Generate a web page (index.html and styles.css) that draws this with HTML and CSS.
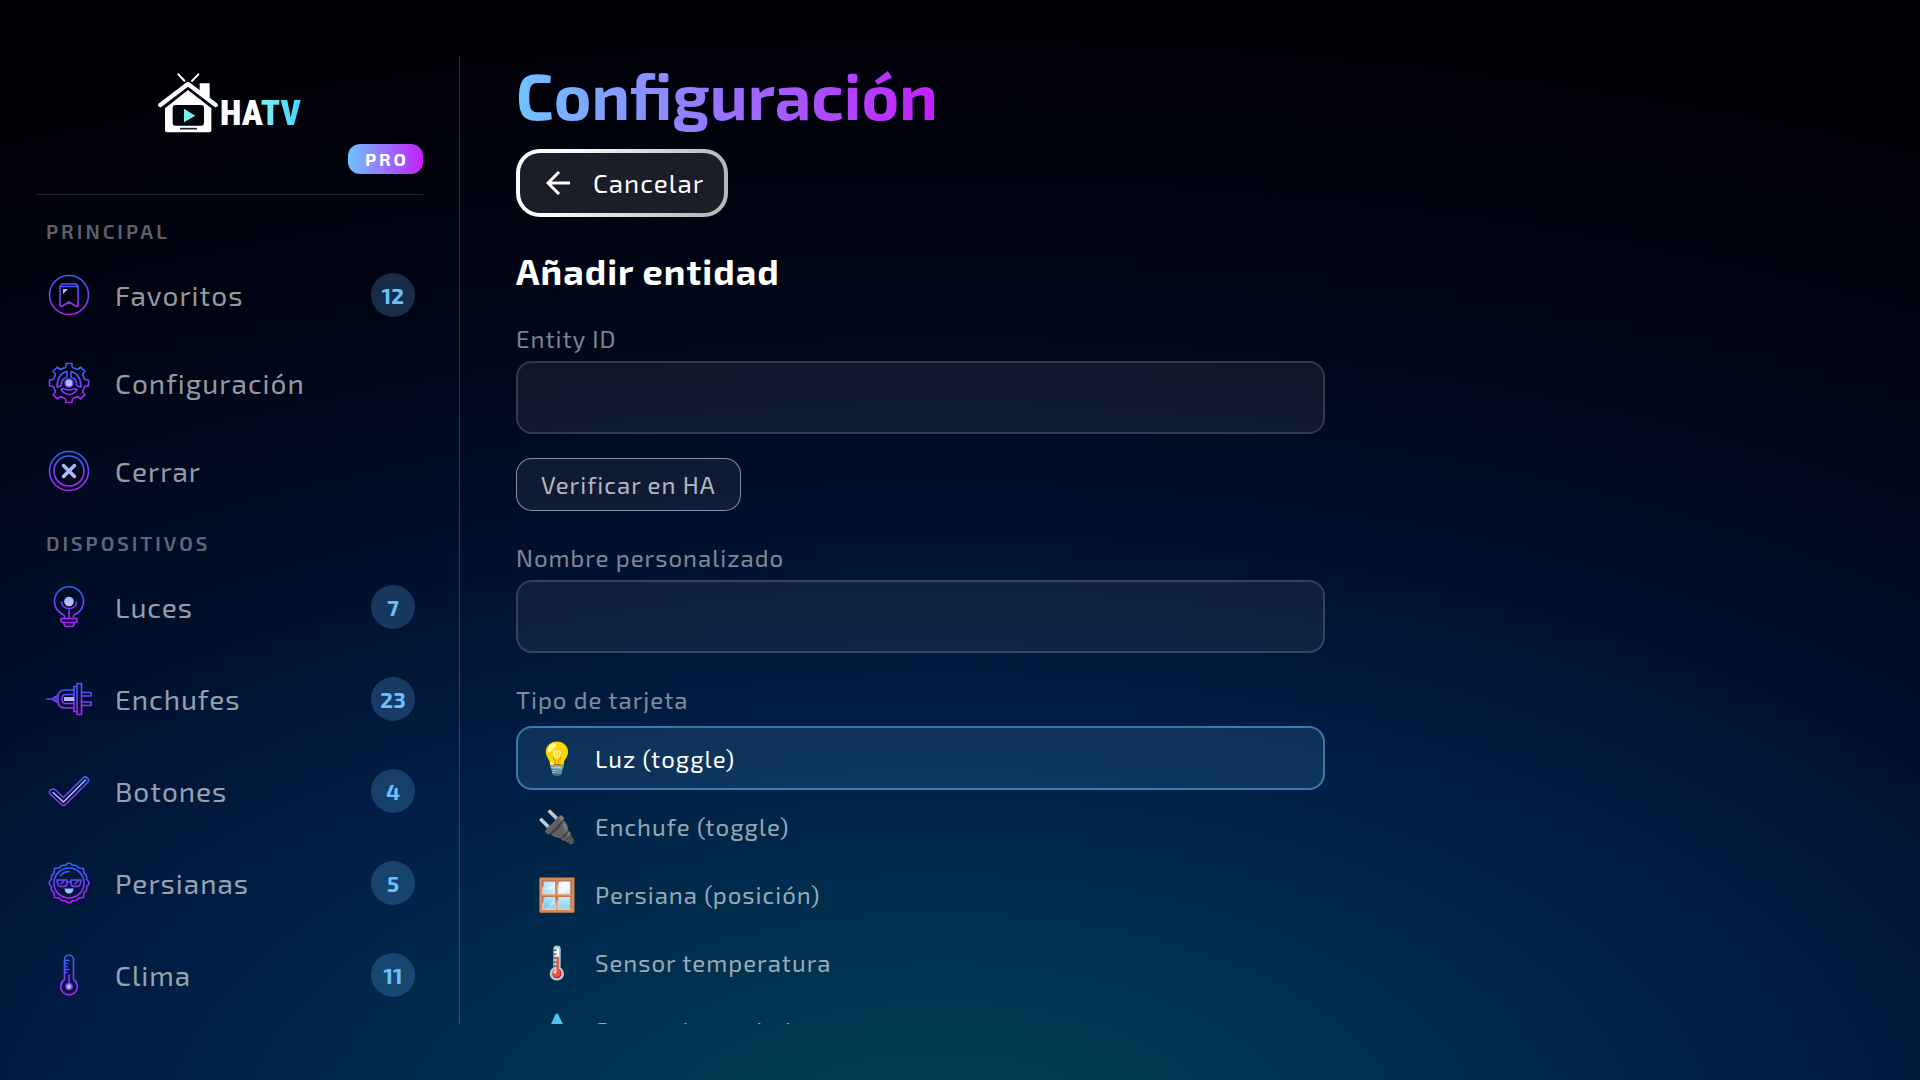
FILE: index.html
```html
<!DOCTYPE html>
<html lang="es">
<head>
<meta charset="utf-8">
<meta name="viewport" content="width=device-width, initial-scale=1">
<title>HATV Pro - Configuración</title>
<link rel="stylesheet" href="styles.css">
</head>
<body>
<svg class="defs" aria-hidden="true">
  <defs>
    <linearGradient id="line" gradientUnits="userSpaceOnUse" x1="0" y1="-20" x2="0" y2="20">
      <stop offset="0" stop-color="#1f6dff"/><stop offset=".5" stop-color="#7340fa"/><stop offset="1" stop-color="#c11cf5"/>
    </linearGradient>
    <linearGradient id="glow" x1="0" y1="0" x2="0" y2="1">
      <stop offset="0" stop-color="#7cc4ff"/><stop offset="1" stop-color="#dcb4fb"/>
    </linearGradient>
    <linearGradient id="glow-wide" gradientUnits="userSpaceOnUse" x1="0" y1="-16" x2="0" y2="16">
      <stop offset="0" stop-color="#7cc4ff"/><stop offset="1" stop-color="#dcb4fb"/>
    </linearGradient>
  </defs>
</svg>
<div class="app">
  <aside class="sidebar">
    <header class="brand">
      <div class="logo">
        <svg class="logo-mark" viewBox="0 0 180 180" aria-hidden="true">
          <path d="M61 4 80 24M121 4 102 24" stroke="#fff" stroke-width="6" stroke-linecap="round"/>
          <path d="M21 106 90 51l70 55v66q0 6-6 6H27q-6 0-6-6z" fill="#fff"/>
          <path d="M7 98 90 33l83 65" fill="none" stroke="#00020c" stroke-width="23" stroke-linejoin="round"/>
          <path d="M125 31h30v50l-30-25z" fill="#fff"/>
          <path d="M7 96 90 33l83 63" fill="none" stroke="#fff" stroke-width="13" stroke-linecap="round" stroke-linejoin="round"/>
          <rect x="44" y="96" width="94" height="62" rx="9" fill="#00020c"/>
          <path d="M78 107v41l34-20z" fill="#74f0ee"/>
          <path d="M66 167h51" stroke="#18203c" stroke-width="5"/>
        </svg>
        <span class="logo-text">HA<b>TV</b></span>
      </div>
      <span class="pro">PRO</span>
    </header>
    <nav>
      <h2 class="nav-title">PRINCIPAL</h2>
      <ul class="nav-list">
        <li><a href="#favoritos" class="nav-item">
          <svg class="icon" viewBox="-23 -23 46 46"><circle r="19.5"/><path d="M-9-8.500V10Q-9 12.500-6.500 11L0 7 6.500 11Q9 12.500 9 10V-8.500ZM-9-8.500-7-11H7L9-8.500"/><path class="fill" d="M-6-6h5l-5 5z"/></svg>
          <span class="label">Favoritos</span><span class="count">12</span></a></li>
        <li><a href="#configuracion" class="nav-item">
          <svg class="icon" viewBox="-23 -23 46 46"><path d="M-4-15.300Q-3-16-3-17.500V-19.500H3V-17.500Q3-16 4-15.300Q6-14.800 8-13.600Q10-14 11.700-15.900L15.900-11.700Q13.500-10 13.600-8Q15-6 15.300-4Q16-3 19.500-3V3Q16 3 15.300 4Q15 6 13.600 8Q13.500 10 15.900 11.700L11.700 15.900Q10 14 8 13.600Q6 15 4 15.300Q3 16 3 19.500H-3Q-3 16-4 15.300Q-6 15-8 13.600Q-10 14-11.700 15.900L-15.900 11.700Q-13.500 10-13.600 8Q-15 6-15.300 4Q-16 3-19.500 3V-3Q-16-3-15.300-4Q-15-6-13.600-8Q-13.500-10-15.900-11.700L-11.700-15.900Q-10-14-8-13.600Q-6-15-4-15.300Z"/><path d="M-2-11.500Q-12-9-12 4Q-9 4-7.500 2Q-8-4-2-6ZM2-11.500Q12-9 12 4Q9 4 7.500 2Q8-4 2-6ZM-8 7Q0 16 8 7 7 5 4.500 6 0 8-4.500 6-7 5-8 7Z"/><circle class="fill" r="4"/><circle r="4"/></svg>
          <span class="label">Configuración</span></a></li>
        <li><a href="#cerrar" class="nav-item">
          <svg class="icon" viewBox="-23 -23 46 46"><circle r="19.5"/><circle r="15"/><path class="bright thick" d="M-5.500-5.500 5.500 5.500M5.500-5.500-5.500 5.500"/></svg>
          <span class="label">Cerrar</span></a></li>
      </ul>
      <h2 class="nav-title">DISPOSITIVOS</h2>
      <ul class="nav-list devices">
        <li><a href="#luces" class="nav-item">
          <svg class="icon" viewBox="-23 -23 46 46"><path d="M-4.500 11.500V9Q-5 7.500-7 7A14.500 14.500 0 1 1 7 7Q5 7.500 4.500 9V11.500M-7.500-5Q-7 1.500 0 1.500T7.500-5M0 1.500V11.500M-8 11.500H8V13.500Q8 15.500 6 15.500H-6Q-8 15.500-8 13.500ZM-5 15.500V17.500L-3.500 19.500H3.500L5 17.500V15.500Z"/><circle class="fill" cy="-5.500" r="4.800"/></svg>
          <span class="label">Luces</span><span class="count">7</span></a></li>
        <li><a href="#enchufes" class="nav-item">
          <svg class="icon" viewBox="-23 -23 46 46"><path d="M-22.500 0H-17L-13-2.500V2.500L-17 0M-13-2.500-11-3.500M-13 2.500-11 3.500M5-9H-4Q-10-9-11-3.500V3.500Q-10 9-4 9H5M5-4.500H-3Q-7-4.500-7 0T-3 4.500H5M5-12.500H8V12.500H5ZM8-15.500H12.500V15.500H8ZM12.500-6.500H22V-3H12.500M12.500 3H22V6.500H12.500"/><path class="fill" d="M-5-2H5V2H-5Z"/></svg>
          <span class="label">Enchufes</span><span class="count">23</span></a></li>
        <li><a href="#botones" class="nav-item">
          <svg class="icon" viewBox="-23 -23 46 46"><path d="M-7.500 13.500Q-5.500 15.500-3.500 13.500L19-9Q20.500-11 18.500-13 16.500-15 14.500-13.500L-5.500 6.500-13.500-1Q-16-3-18.500-1-20.500 1-19 3Z"/><path class="bright" d="M-16 1.500-5.500 11 16.500-11"/></svg>
          <span class="label">Botones</span><span class="count">4</span></a></li>
        <li><a href="#persianas" class="nav-item">
          <svg class="icon" viewBox="-23 -23 46 46"><path d="M0-20Q2-20 3.500-17.500 8-18.500 9.500-15L14.500-14.500 15-9.500Q18.500-8 17.500-3.500 20-2 20 0 20 2 17.500 3.500 18.500 8 15 9.500L14.500 14.500 9.500 15Q8 18.500 3.500 17.500 2 20 0 20-2 20-3.500 17.500-8 18.500-9.500 15L-14.500 14.500-15 9.500Q-18.500 8-17.500 3.500-20 2-20 0-20-2-17.500-3.500-18.500-8-15-9.500L-14.500-14.500-9.500-15Q-8-18.500-3.500-17.500-2-20 0-20Z"/><circle r="15"/><path d="M-8.500-7.500Q-5-11.500 0-11.500M-12-3H-2V0Q-2 3.500-5 3.500H-8Q-11 3.500-11.500 0ZM2-3H12L11.500 0Q11 3.500 8 3.500H5Q2 3.500 2 0ZM-2-1H2M-8 1-5-2M6 1 9-2"/><path class="fill" d="M-4.500 5.500H4.500Q4 10.500 0 10.500T-4.500 5.500Z"/></svg>
          <span class="label">Persianas</span><span class="count">5</span></a></li>
        <li><a href="#clima" class="nav-item">
          <svg class="icon" viewBox="-23 -23 46 46"><path d="M-4.500 4.500V-15.500A4.500 4.500 0 0 1 4.500-15.500V4.500A8.300 8.300 0 1 1-4.500 4.500ZM0 0V8M-4-14.500H0M-4-11.500H-2M-4-8.500H-2M-4-5.500H0M-4-2.500H-2"/><circle class="fill" cy="11.500" r="3"/><circle cy="11.500" r="3"/></svg>
          <span class="label">Clima</span><span class="count">11</span></a></li>
      </ul>
    </nav>
  </aside>
  <main class="content">
    <h1 class="page-title">Configuración</h1>
    <button type="button" class="cancel">
      <svg class="arrow" viewBox="0 0 24 24" aria-hidden="true"><path d="M24 12H2M13 1 2 12l11 11"/></svg>
      Cancelar
    </button>
    <form class="entity-form">
      <h2 class="form-title">Añadir entidad</h2>
      <div class="field">
        <label for="entity">Entity ID</label>
        <input id="entity" type="text">
      </div>
      <button type="button" class="verify">Verificar en HA</button>
      <div class="field">
        <label for="name">Nombre personalizado</label>
        <input id="name" type="text">
      </div>
      <div class="field card-types" role="radiogroup" aria-labelledby="type-title">
        <span id="type-title" class="group-title">Tipo de tarjeta</span>
        <label class="option"><input type="radio" name="type" checked><span class="emoji">💡</span>Luz (toggle)</label>
        <label class="option"><input type="radio" name="type"><span class="emoji">🔌</span>Enchufe (toggle)</label>
        <label class="option"><input type="radio" name="type"><span class="emoji">🪟</span>Persiana (posición)</label>
        <label class="option"><input type="radio" name="type"><span class="emoji">🌡️</span>Sensor temperatura</label>
        <label class="option"><input type="radio" name="type"><span class="emoji">💧</span>Sensor humedad</label>
      </div>
    </form>
  </main>
</div>
</body>
</html>
```
FILE: styles.css
```css
* { box-sizing: border-box; }

body {
  margin: 0;
  color: #fff;
  font-family: "Exo 2", "Noto Sans", sans-serif;
  font-size: 24px;
  line-height: 32px;
  letter-spacing: 1px;
  background: radial-gradient(ellipse 120% 106% at 49% 106%,
    #004254 0%, #003c53 7%, #002f4f 20%, #001c42 39%, #000e2a 58%, #000412 80%, #000006 100%) fixed;
}

h1, h2, ul { margin: 0; padding: 0; }
button, input { font: inherit; color: inherit; letter-spacing: inherit; }

.defs { position: absolute; width: 0; height: 0; }

.app {
  display: flex;
  height: 100vh;
  padding: 56px 0;
}

/* Sidebar */
.sidebar {
  flex: 0 0 460px;
  padding: 0 36px;
  border-right: 1px solid rgba(255, 255, 255, .18);
  overflow: hidden;
}

.brand {
  display: flex;
  flex-direction: column;
  gap: 8px;
  padding: 14px 0 20px;
  border-bottom: 1px solid rgba(255, 255, 255, .14);
}

.logo {
  display: flex;
  align-self: center;
  align-items: flex-end;
  gap: 2px;
  height: 66px;
}

.logo-mark { width: 60px; height: 60px; fill: none; align-self: center; }

.logo-text {
  padding-bottom: 3px;
  font: 900 35px/38px "Roboto Condensed", "Fira Sans Condensed", "Barlow Condensed", "Oswald", "Exo 2", sans-serif;
  letter-spacing: 0;
}

.logo-text b {
  background: linear-gradient(90deg, #7cf3ea, #44d2ff);
  background-clip: text;
  color: transparent;
  font-weight: inherit;
}

.pro {
  align-self: flex-end;
  padding: 0 14px 0 17px;
  border-radius: 12px;
  background: linear-gradient(90deg, #6fc3ff, #c41fff);
  font-size: 18px;
  font-weight: 700;
  line-height: 30px;
  letter-spacing: 3px;
}

.nav-title {
  padding: 20px 10px 4px;
  color: rgba(255, 255, 255, .4);
  font-size: 20px;
  font-weight: 600;
  line-height: 32px;
  letter-spacing: 3px;
}

.nav-list { list-style: none; }
.nav-list + .nav-title { padding: 12px 10px 2px; }

.nav-item {
  display: flex;
  align-items: center;
  gap: 23px;
  height: 88px;
  padding: 0 8px 0 10px;
  color: rgba(255, 255, 255, .6);
  font-size: 28px;
  text-decoration: none;
}

.devices .nav-item { height: 92px; }

.icon {
  flex: none;
  width: 46px;
  height: 46px;
  fill: none;
  stroke: url(#line);
  stroke-width: 1.6;
  stroke-linejoin: round;
  stroke-linecap: round;
}

.icon .fill { fill: url(#glow); stroke: none; }
.icon .bright { stroke: url(#glow-wide); }
.icon .thick { stroke-width: 3.5; }

.label { flex: 1; }

.count {
  width: 44px;
  border-radius: 50%;
  background: rgba(106, 193, 255, .22);
  color: #6ac1ff;
  font-size: 22px;
  font-weight: 700;
  line-height: 44px;
  letter-spacing: 0;
  text-align: center;
}

/* Content */
.content {
  flex: 1;
  padding: 0 56px;
  overflow: hidden;
}

.page-title {
  width: fit-content;
  margin-bottom: 15px;
  background: linear-gradient(90deg, #6fc3ff, #c41fff);
  background-clip: text;
  color: transparent;
  font-size: 64px;
  line-height: 78px;
  letter-spacing: 0;
}

.cancel {
  display: flex;
  align-items: center;
  gap: 23px;
  height: 68px;
  padding: 0 20px 0 26px;
  border: 4px solid transparent;
  border-radius: 24px;
  background:
    linear-gradient(#1b1d28, #1b1d28) padding-box,
    linear-gradient(110deg, #fff 20%, #b8b8bc 90%) border-box;
  font-size: 26px;
}

.arrow { width: 24px; height: 24px; fill: none; stroke: #fff; stroke-width: 3; }

.entity-form { width: 60%; }

.form-title {
  margin: 30px 0 28px;
  font-size: 36px;
  line-height: 48px;
}

.field {
  display: flex;
  flex-direction: column;
  gap: 6px;
}

.field > label:not(.option), .group-title { color: rgba(255, 255, 255, .5); }

.field input[type="text"] {
  width: 100%;
  height: 73px;
  padding: 0 20px;
  border: 2px solid rgba(255, 255, 255, .15);
  border-radius: 16px;
  background: rgba(255, 255, 255, .06);
  outline: none;
}

.verify {
  display: block;
  height: 53px;
  margin: 24px 0 31px;
  padding: 0 24px;
  border: 1px solid rgba(255, 255, 255, .5);
  border-radius: 16px;
  background: rgba(255, 255, 255, .06);
  color: rgba(255, 255, 255, .7);
}

.card-types { margin-top: 31px; gap: 4px; }
.group-title { margin-bottom: 6px; }

.option {
  display: flex;
  flex: none;
  align-items: center;
  height: 64px;
  padding: 2px 19px 0;
  border: 2px solid transparent;
  border-radius: 16px;
  color: rgba(255, 255, 255, .6);
}

.option input {
  appearance: none;
  width: 0;
  height: 0;
  margin: 0;
}

.option:has(:checked) {
  border-color: rgba(106, 193, 255, .5);
  background: rgba(106, 193, 255, .13);
  color: #fff;
}

.emoji {
  flex: none;
  width: 58px;
  color: #fff;
  font-family: "Noto Color Emoji", sans-serif;
  font-size: 32px;
  letter-spacing: 0;
}
```
